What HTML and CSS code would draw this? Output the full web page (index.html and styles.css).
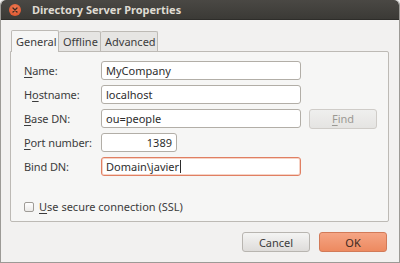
FILE: index.html
```html
<!DOCTYPE html>
<html>
<head>
<meta charset="utf-8">
<link rel="stylesheet" href="styles.css">
</head>
<body>
<div class="window">
  <div class="titlebar">
    <span class="close"><svg width="12" height="12" viewBox="0 0 12 12"><path d="M4 4 L8 8 M8 4 L4 8" stroke="#3a2a22" stroke-width="1.3" stroke-linecap="round"/></svg></span>
    <span class="title">Directory Server Properties</span>
  </div>
  <div class="content">
    <div class="tabs">
      <div class="tab active">General</div>
      <div class="tab">Offline</div>
      <div class="tab">Advanced</div>
    </div>
    <div class="panel">
      <div class="form">
        <label class="lbl"><u>N</u>ame:</label>
        <div class="input">MyCompany</div>
        <span></span>
        <label class="lbl">H<u>o</u>stname:</label>
        <div class="input">localhost</div>
        <span></span>
        <label class="lbl"><u>B</u>ase DN:</label>
        <div class="input">ou=people</div>
        <div class="btn find"><u>F</u>ind</div>
        <label class="lbl"><u>P</u>ort number:</label>
        <div class="input port">1389</div>
        <span></span>
        <label class="lbl">Bind DN:</label>
        <div class="input focus">Domain\javier<span class="caret"></span></div>
        <span></span>
      </div>
      <div class="check"><span class="box"></span><span><u>U</u>se secure connection (SSL)</span></div>
    </div>
    <div class="footer">
      <div class="btn cancel">Cancel</div>
      <div class="btn ok">OK</div>
    </div>
  </div>
</div>
</body>
</html>
```
FILE: styles.css
```css
* { box-sizing: border-box; }
html, body { margin: 0; padding: 0; background: #f2f1f0; }
body { font-family: "Noto Sans", "DejaVu Sans", sans-serif; font-size: 11px; color: #3c3c3c; }
u { text-decoration: underline; text-underline-offset: 2px; }
.window {
  width: 400px; height: 263px; background: #f2f1f0;
  border: 1px solid #9c9a96; border-top: none;
  display: flex; flex-direction: column; overflow: hidden;
  border-radius: 5px 5px 0 0;
}
.titlebar {
  height: 20px; flex: none;
  background: linear-gradient(#4a4844, #3b3a36);
  display: flex; align-items: center; padding-left: 8px;
  border-radius: 5px 5px 0 0;
  border-bottom: 1px solid #2e2d2a;
}
.close {
  width: 12px; height: 12px; border-radius: 50%;
  background: radial-gradient(circle at 50% 35%, #f07a52, #d9502a);
  display: flex; margin-right: 11px;
}
.title { color: #dfdbd2; font-weight: bold; font-size: 11px; }
.content { flex: 1; padding: 10px 10px 0 9px; display: flex; flex-direction: column; }
.tabs { display: flex; align-items: flex-end; height: 21px; padding-left: 1px; position: relative; z-index: 1; }
.tab {
  height: 20px; padding: 0 4px; line-height: 19px;
  background: #e6e5e3; border: 1px solid #bdbab5; border-bottom: none;
  border-left: none;
  border-radius: 2px 2px 0 0;
}
.tab:nth-child(2) { width: 42px; text-align: center; }
.tab:nth-child(3) { width: 57px; text-align: center; }
.tab.active {
  height: 22px; width: 48px; text-align: center; background: #f6f6f5; border-left: 1px solid #bdbab5;
  line-height: 22px; margin-bottom: -1px;
}
.panel {
  width: 379px; height: 171px; background: #f6f6f5;
  border: 1px solid #bdbab5; border-radius: 0 2px 2px 2px;
  padding: 9px 0 0 13px;
  display: flex; flex-direction: column;
}
.form {
  display: grid; grid-template-columns: 69px 200px 68px;
  grid-auto-rows: 19px; row-gap: 5px; column-gap: 8px; align-items: center;
}
.lbl { line-height: 19px; white-space: nowrap; letter-spacing: -0.1px; }
.input {
  height: 19px; background: #fff; border: 1px solid #b2aea7; border-radius: 3px;
  padding: 0 4px; line-height: 17px; color: #2d2d2d; font-size: 11px;
  display: flex; align-items: center;
}
.input.port { width: 76px; justify-content: flex-end; padding-right: 4px; }
.input.focus { border-color: #e07f62; box-shadow: 0 0 0 1px #f6d3c6 inset; }
.caret { width: 1px; height: 13px; background: #2d2d2d; margin-left: 1px; }
.btn {
  height: 20px; border: 1px solid #b8b5b0; border-radius: 3px;
  display: flex; align-items: center; justify-content: center;
  background: linear-gradient(#f4f4f3, #dedcda);
}
.find { color: #9b9994; border-color: #cfccc8; background: linear-gradient(#efefee, #e5e4e2); }
.check { display: flex; align-items: center; margin-top: 23px; padding-left: 0; }
.box {
  width: 10px; height: 10px; border: 1px solid #9f9c97; border-radius: 2px;
  background: linear-gradient(#fff, #ebeae8); margin-right: 5px;
}
.footer { display: flex; justify-content: flex-end; gap: 9px; padding-top: 10px; padding-right: 2px; }
.cancel { width: 68px; }
.ok {
  width: 68px; color: #3c2a22;
  background: linear-gradient(#f5a584, #ed8a60); border-color: #d27a58;
}
```
